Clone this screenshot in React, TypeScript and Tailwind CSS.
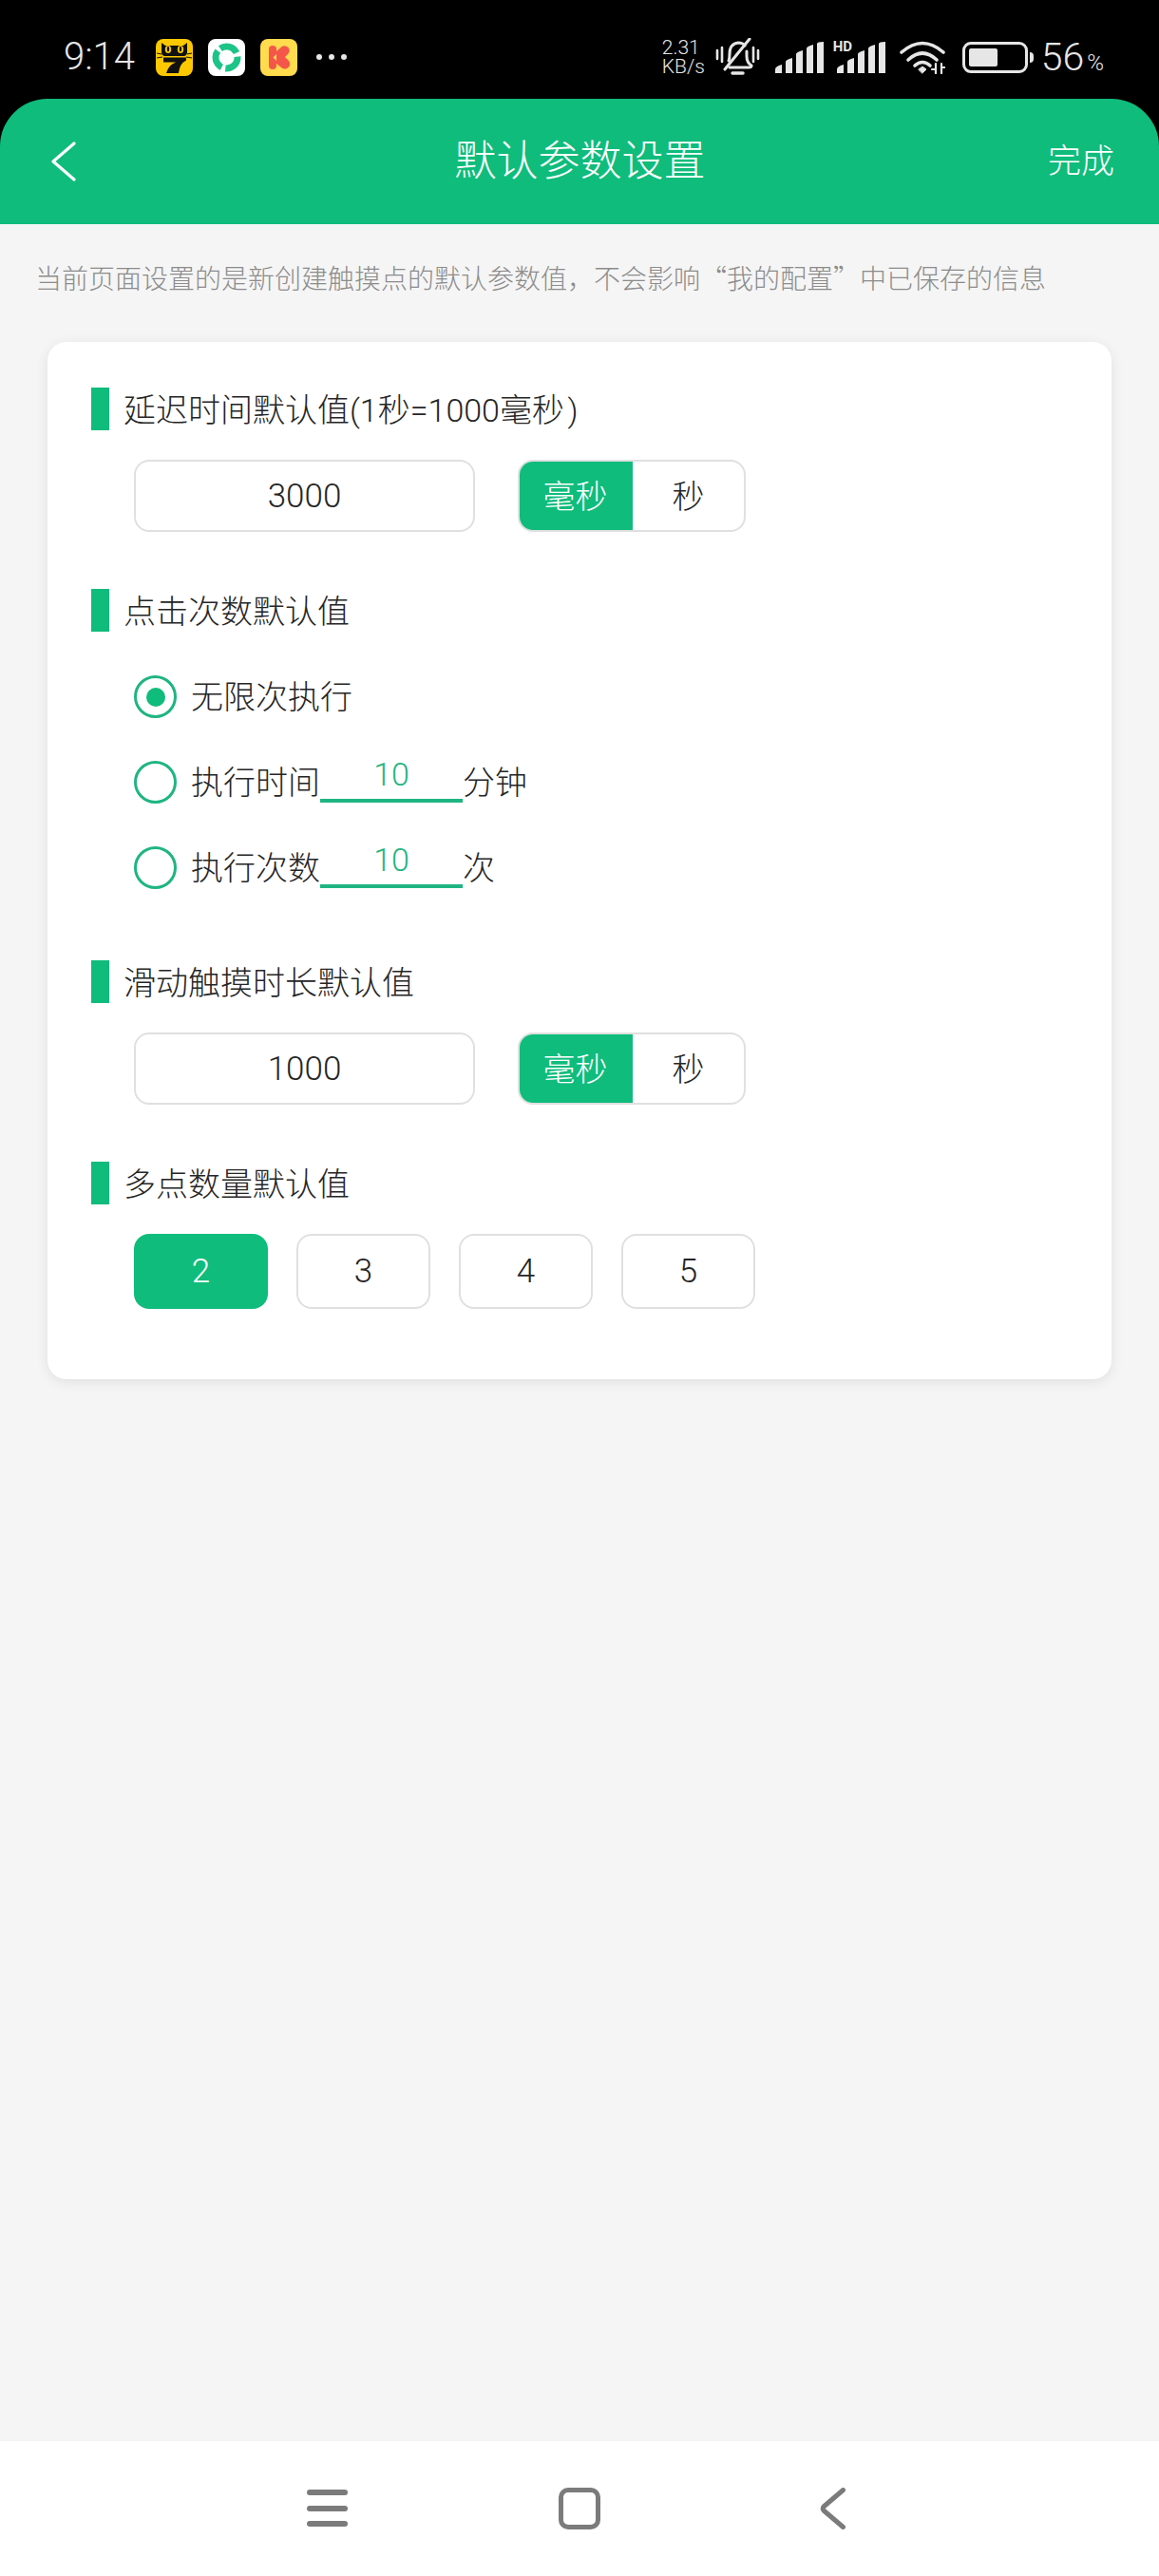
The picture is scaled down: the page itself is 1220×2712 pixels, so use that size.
import { useState } from 'react';

const GREEN = 'bg-[#0fbc7c]';

function CatIcon() {
  return (
    <svg width="39" height="39" viewBox="0 0 39 39" className="block">
      <rect width="39" height="39" rx="8" fill="#fcc800" />
      <path d="M6 4 L10 7 H29 L33 4 V14 Q33 17 30 18 H9 Q6 17 6 14 Z" fill="#111" />
      <ellipse cx="13" cy="11" rx="3.200" ry="4" fill="#fcc800" />
      <ellipse cx="26" cy="11" rx="3.200" ry="4" fill="#fcc800" />
      <ellipse cx="13" cy="10.500" rx="1.200" ry="2.800" fill="#111" />
      <ellipse cx="26" cy="10.500" rx="1.200" ry="2.800" fill="#111" />
      <path d="M8 19.500 H32 V22.500 Q25 26 24 36 H11 Q13 28 21 24.500 H8 Z" fill="#111" />
      <path d="M1 15 L6 16 M1 20 L7 19 M38 15 L33 16 M38 20 L32 19" stroke="#111" strokeWidth="1" />
    </svg>
  );
}

function SwirlIcon() {
  return (
    <svg width="39" height="39" viewBox="0 0 39 39" className="block">
      <rect width="39" height="39" rx="8" fill="#fff" />
      <circle
        cx="19.500"
        cy="19.500"
        r="11.500"
        fill="none"
        stroke="#1cc488"
        strokeWidth="7"
        strokeDasharray="20 4.090"
        transform="rotate(-125 19.500 19.500)"
      />
    </svg>
  );
}

function KIcon() {
  return (
    <svg width="39" height="39" viewBox="0 0 39 39" className="block">
      <rect width="39" height="39" rx="8" fill="#ffdb4d" />
      <path
        d="M9 11 Q9 7 13 7 Q17 7 17 11 L17 13 L22 8.500 Q26 6 29.500 9 Q32 12.500 29 16 L26 19 L30 23 Q32.500 27 29.500 30 Q26 33 22 30 L17 26 L17 28 Q17 32 13 32 Q9 32 9 28 Z"
        fill="#f4574a"
      />
      <path d="M17 16 L13.500 19.500 L17 23 Z" fill="#ffdb4d" />
    </svg>
  );
}

function Signal() {
  return (
    <svg width="51" height="33" viewBox="0 0 51 33" className="block" fill="#e6e6e6">
      <path d="M0 33 V29 Q0 26 7 24 V33 Z" />
      <path d="M11 33 V21 Q11 19 18 17 V33 Z" />
      <path d="M22 33 V13 Q22 11 29 9 V33 Z" />
      <path d="M33 33 V7 Q33 5 40 3 V33 Z" />
      <path d="M44 33 V2 Q44 0 51 0 V33 Z" />
    </svg>
  );
}

function MutedBell() {
  return (
    <svg width="47" height="40" viewBox="0 0 47 40" className="block" fill="none" stroke="#e6e6e6" strokeLinecap="round">
      <path d="M2 13 V22 M7 10 V25 M40 10 V25 M45 13 V22" strokeWidth="2.600" />
      <path d="M14 24 Q15 22 15 17 Q15 6 24 5 Q29 5 31 8 M33 14 V19 Q33 26 38 29 Q38 31 35 31 H15" strokeWidth="3" />
      <path d="M10 33 L36 1" strokeWidth="3" />
      <path d="M18 37 H29" strokeWidth="3.500" />
    </svg>
  );
}

function Wifi() {
  return (
    <svg width="48" height="36" viewBox="0 0 48 36" className="block" fill="none" stroke="#e6e6e6" strokeWidth="3.600" strokeLinecap="round">
      <path d="M2 13 Q24 -6 46 13" />
      <path d="M9 21 Q24 7 39 21" />
      <path d="M16 27 Q24 20 32 27" />
      <path d="M20 31 L24 28 L28 31 L24 35 Z" fill="#e6e6e6" strokeWidth="1" />
      <path d="M38 25 V35 M44 25 V35" strokeWidth="2.200" stroke="#e6e6e6" />
      <path d="M34 31 H38 M44 29 H48" strokeWidth="2.200" />
    </svg>
  );
}

function StatusBar() {
  return (
    <div className="flex h-[104px] items-center justify-between bg-black pl-[67px] pr-[58px] pt-[16px] text-[#e6e6e6]">
      <div className="flex items-center">
        <span className="w-[76px] text-[40px] leading-none">9:14</span>
        <div className="ml-[21px] flex gap-[16px]">
          <CatIcon />
          <SwirlIcon />
          <KIcon />
        </div>
        <div className="ml-[20px] flex gap-[7px]">
          {[0, 1, 2].map((i) => (
            <span key={i} className="h-[6px] w-[6px] rounded-full bg-[#e6e6e6]" />
          ))}
        </div>
      </div>
      <div className="flex items-center">
        <div className="flex w-[43px] flex-col text-[21px] leading-[20px]">
          <span>2.31</span>
          <span>KB/s</span>
        </div>
        <div className="ml-[13px]">
          <MutedBell />
        </div>
        <div className="ml-[16px]">
          <Signal />
        </div>
        <div className="relative ml-[14px]">
          <Signal />
          <span className="absolute left-[-4px] top-[-2px] text-[15px] font-bold leading-none">HD</span>
        </div>
        <div className="ml-[15px]">
          <Wifi />
        </div>
        <div className="ml-[18px] flex items-center gap-[2px]">
          <div className="flex h-[33px] w-[69px] rounded-[9px] border-[3px] border-[#e6e6e6] p-[4px]">
            <div className="w-[30px] rounded-[2px] bg-[#e6e6e6]" />
          </div>
          <div className="h-[11px] w-[4px] rounded-r-full bg-[#e6e6e6]" />
        </div>
        <div className="ml-[8px] flex items-baseline">
          <span className="text-[41px] leading-none">56</span>
          <span className="ml-[3px] text-[24px] leading-none">%</span>
        </div>
      </div>
    </div>
  );
}

function SectionTitle({ children }: { children: string }) {
  return (
    <div className="flex h-[45px] items-center gap-[15px]">
      <div className="h-[45px] w-[19px] bg-[#0fbc7c]" />
      <span className="mt-[2px] text-[34px] leading-none text-[#262626]">{children}</span>
    </div>
  );
}

function ValueRow({ value }: { value: string }) {
  return (
    <div className="ml-[45px] mt-[31px] flex h-[76px] gap-[45px]">
      <div className="flex w-[359px] items-center justify-center rounded-[16px] border-2 border-[#e0e0e0] pt-[2px] text-[35px] text-[#262626]">
        {value}
      </div>
      <div className="flex w-[240px] overflow-hidden rounded-[16px] border-2 border-[#e0e0e0] text-[34px]">
        <div className={`${GREEN} -m-[2px] mr-0 flex w-[121px] items-center justify-center pt-[2px] text-white`}>毫秒</div>
        <div className="flex flex-1 items-center justify-center pt-[2px] text-[#262626]">秒</div>
      </div>
    </div>
  );
}

function RadioMark({ checked }: { checked?: boolean }) {
  return (
    <div className="flex h-[45px] w-[45px] items-center justify-center rounded-full border-[3px] border-[#1fb582]">
      {checked && <div className="h-[20px] w-[20px] rounded-full bg-[#0fbc7c]" />}
    </div>
  );
}

function LimitRow({ label, value, unit }: { label: string; value: string; unit: string }) {
  return (
    <div className="flex h-[45px] items-center">
      <RadioMark />
      <span className="ml-[15px] text-[34px] leading-none text-[#262626]">{label}</span>
      <div className="mt-[-2px] flex h-[45px] w-[150px] items-start justify-center border-b-4 border-[#1fb582] text-[34px] leading-[30px] text-[#1fb582]">
        {value}
      </div>
      <span className="text-[34px] leading-none text-[#262626]">{unit}</span>
    </div>
  );
}

export default function App() {
  const [points] = useState(2);

  return (
    <div className="flex h-[2712px] w-[1220px] flex-col bg-black font-['Roboto','Noto_Sans_CJK_SC',sans-serif] font-light">
      <StatusBar />

      <header className={`${GREEN} grid h-[132px] grid-cols-[1fr_auto_1fr] items-center rounded-t-[50px] pl-[54px] pr-[47px]`}>
        <svg width="26" height="42" viewBox="0 0 26 42" fill="none" stroke="#fff" strokeWidth="3.200" strokeLinecap="round" strokeLinejoin="round">
          <path d="M24 2 L2 21 L24 40" />
        </svg>
        <h1 className="pr-[6px] text-[44px] font-light leading-none text-white">默认参数设置</h1>
        <span className="justify-self-end text-[35px] leading-none text-white">完成</span>
      </header>

      <main className="flex-1 bg-[#f5f5f5] px-[37px] pt-[37px]">
        <p className="h-[40px] whitespace-nowrap text-[28px] leading-[38px] text-[#8c8c8c]">
          当前页面设置的是新创建触摸点的默认参数值，不会影响
          <span className="font-['Noto_Sans_CJK_SC',sans-serif]">“</span>
          我的配置
          <span className="font-['Noto_Sans_CJK_SC',sans-serif]">”</span>
          中已保存的信息
        </p>

        <div className="-mx-[37px] mt-[47px] px-[50px]">
          <div className="rounded-[20px] bg-white pb-[74px] pl-[46px] pt-[48px] shadow-[0_3px_14px_rgba(0,0,0,0.09)]">
            <SectionTitle>{'延迟时间默认值(1秒=1000毫秒\u200a)'}</SectionTitle>
            <ValueRow value="3000" />

            <div className="mt-[60px]">
              <SectionTitle>点击次数默认值</SectionTitle>
            </div>
            <div className="ml-[45px] mt-[46px] flex flex-col gap-[45px]">
              <div className="flex h-[45px] items-center">
                <RadioMark checked />
                <span className="ml-[15px] text-[34px] leading-none text-[#262626]">无限次执行</span>
              </div>
              <LimitRow label="执行时间" value="10" unit="分钟" />
              <LimitRow label="执行次数" value="10" unit="次" />
            </div>

            <div className="mt-[75px]">
              <SectionTitle>滑动触摸时长默认值</SectionTitle>
            </div>
            <ValueRow value="1000" />

            <div className="mt-[60px]">
              <SectionTitle>多点数量默认值</SectionTitle>
            </div>
            <div className="ml-[45px] mt-[31px] flex gap-[30px]">
              {[2, 3, 4, 5].map((n) => (
                <div
                  key={n}
                  className={
                    n === points
                      ? 'flex h-[79px] w-[141px] items-center justify-center rounded-[16px] bg-[#0fbc7c] pt-[2px] text-[35px] text-white'
                      : 'flex h-[79px] w-[141px] items-center justify-center rounded-[16px] border-2 border-[#e0e0e0] pt-[2px] text-[35px] text-[#262626]'
                  }
                >
                  {n}
                </div>
              ))}
            </div>
          </div>
        </div>
      </main>

      <nav className="flex h-[142px] items-center bg-white pl-[323px] pb-[1px]">
        <div className="flex w-[43px] flex-col gap-[10.500px]">
          {[0, 1, 2].map((i) => (
            <div key={i} className="h-[6px] rounded-full bg-[#7b7b7b]" />
          ))}
        </div>
        <div className="ml-[222px] h-[44px] w-[44px] rounded-[10px] border-[5px] border-[#7b7b7b]" />
        <svg className="ml-[231px]" width="27" height="44" viewBox="0 0 27 44" fill="none" stroke="#7b7b7b" strokeWidth="5" strokeLinecap="round" strokeLinejoin="round">
          <path d="M24.500 2.500 L4 20 Q2.500 22 4 24 L24.500 41.500" />
        </svg>
      </nav>
    </div>
  );
}
